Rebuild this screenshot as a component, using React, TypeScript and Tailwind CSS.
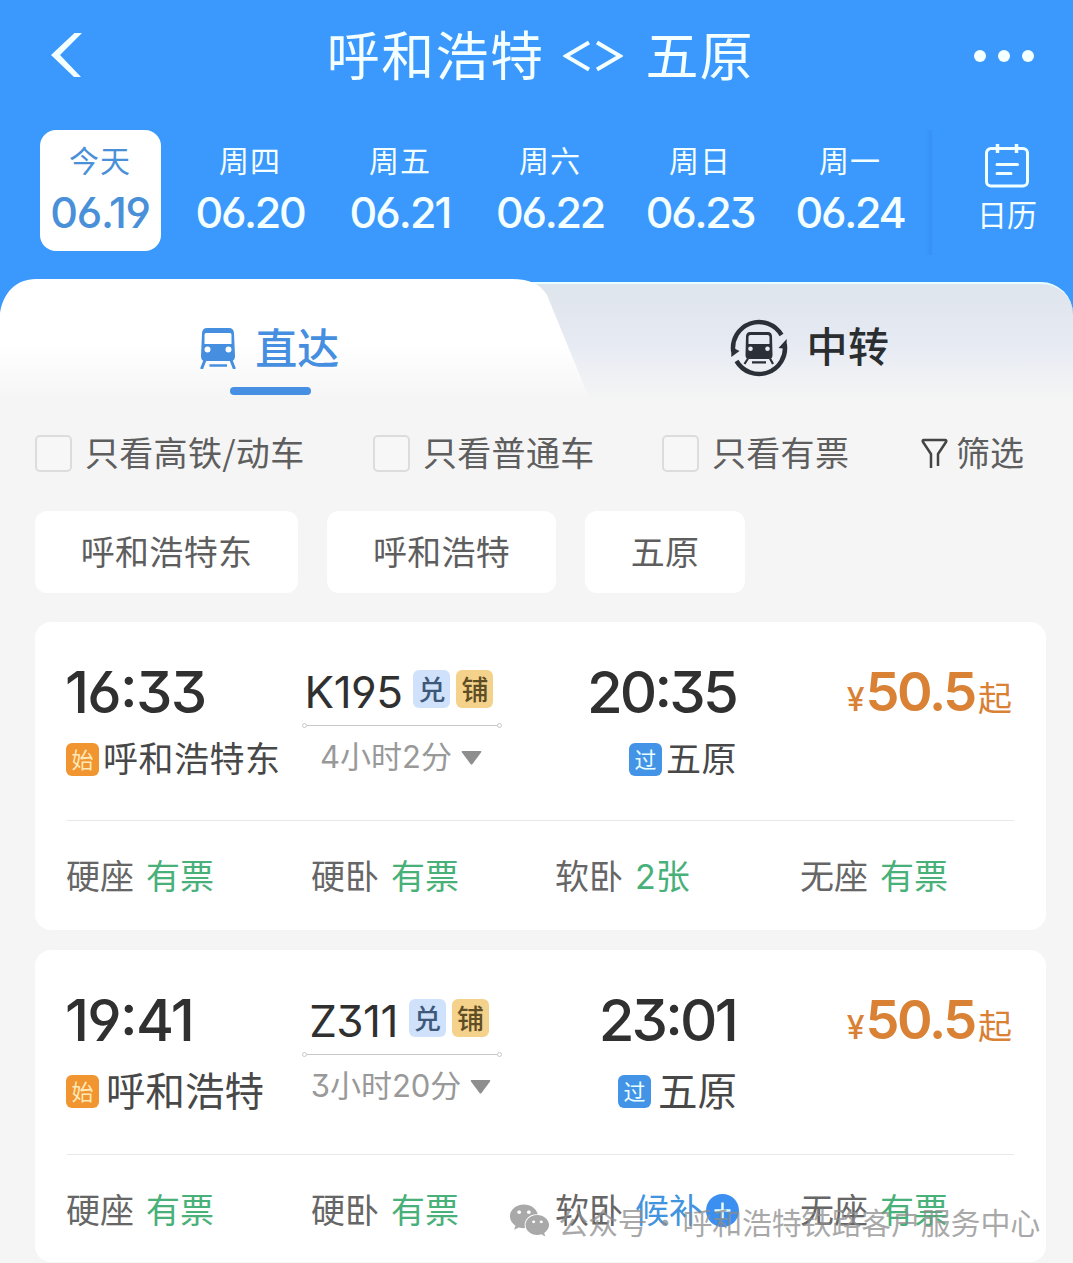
import { FaWeixin } from 'react-icons/fa';
import clsx from 'clsx';

interface DateItem {
  week: string;
  day: string;
  tracking: string;
}

interface Seat {
  name: string;
  status: string;
  waitlist?: boolean;
}

interface Train {
  no: string;
  depart: string;
  arrive: string;
  from: string;
  to: string;
  duration: string;
  price: string;
  large?: boolean;
  seats: Seat[];
}

// open 6 / 9 and flat-top 3
const digits = "font-['Inter','Noto_Sans_CJK_SC',sans-serif] [font-feature-settings:'cv03','cv04','cv09','calt']";

const dates: DateItem[] = [
  { week: '今天', day: '06.19', tracking: 'tracking-[-1.300px]' },
  { week: '周四', day: '06.20', tracking: 'tracking-[-2.300px]' },
  { week: '周五', day: '06.21', tracking: 'tracking-[-1.900px]' },
  { week: '周六', day: '06.22', tracking: 'tracking-[-2.300px]' },
  { week: '周日', day: '06.23', tracking: 'tracking-[-2.300px]' },
  { week: '周一', day: '06.24', tracking: 'tracking-[-2.300px]' },
];

const filters = [
  { label: '只看高铁/动车', width: 'w-[338px]' },
  { label: '只看普通车', width: 'w-[289px]' },
  { label: '只看有票', width: 'w-[259px]' },
];

const stations = [
  { name: '呼和浩特东', width: 'w-[263px]' },
  { name: '呼和浩特', width: 'w-[229px]' },
  { name: '五原', width: 'w-[160px]' },
];

const trains: Train[] = [
  {
    no: 'K195',
    depart: '16:33',
    arrive: '20:35',
    from: '呼和浩特东',
    to: '五原',
    duration: '4小时2分',
    price: '50.5',
    seats: [
      { name: '硬座', status: '有票' },
      { name: '硬卧', status: '有票' },
      { name: '软卧', status: '2张' },
      { name: '无座', status: '有票' },
    ],
  },
  {
    no: 'Z311',
    depart: '19:41',
    arrive: '23:01',
    from: '呼和浩特',
    to: '五原',
    duration: '3小时20分',
    price: '50.5',
    large: true,
    seats: [
      { name: '硬座', status: '有票' },
      { name: '硬卧', status: '有票' },
      { name: '软卧', status: '候补', waitlist: true },
      { name: '无座', status: '有票' },
    ],
  },
];

function TrainIcon({ className }: { className: string }) {
  return (
    <svg className={className} viewBox="0 0 36 41" fill="none">
      <path
        fillRule="evenodd"
        clipRule="evenodd"
        fill="currentColor"
        d="M7 0H29Q33.500 0 34 5L35 28Q35 33 31 33H5Q1 33 1 28L2 5Q2.500 0 7 0ZM6 5Q4.500 5 4.500 7V16H31.500V7Q31.500 5 30 5ZM7.500 18.500a3 3 0 1 0 0 6a3 3 0 0 0 0-6ZM28.500 18.500a3 3 0 1 0 0 6a3 3 0 0 0 0-6Z"
      />
      <path d="M5 32L1.500 41M31 32L34.500 41" stroke="currentColor" strokeWidth="3" />
      <path d="M9.500 37.500H27" stroke="currentColor" strokeWidth="2.500" />
    </svg>
  );
}

function TransferIcon() {
  return (
    <svg className="h-[58px] w-[58px]" viewBox="0 0 58 58" fill="none">
      <path d="M3.300 33A26 26 0 0 1 51.500 16" stroke="#2b2f38" strokeWidth="4.500" />
      <path d="M54.700 25A26 26 0 0 1 6.500 42" stroke="#2b2f38" strokeWidth="4.500" />
      <path d="M1.300 38V28L9.500 32Z M56.700 20V30L48.500 29Z" fill="#2b2f38" />
      <path
        fillRule="evenodd"
        clipRule="evenodd"
        fill="#2b2f38"
        d="M20 13H38Q41.500 13 42 17L42.500 36Q42.500 40 39 40H19Q15.500 40 15.500 36L16 17Q16.500 13 20 13ZM20.500 16Q18.500 16 18.500 18V25H39.500V18Q39.500 16 37.500 16ZM20.500 27.500a2.300 2.300 0 1 0 0 4.600a2.300 2.300 0 0 0 0-4.600ZM37.500 27.500a2.300 2.300 0 1 0 0 4.600a2.300 2.300 0 0 0 0-4.600Z"
      />
      <path d="M18 39.500L14.500 45M40 39.500L43 45M22 43.300H36" stroke="#2b2f38" strokeWidth="2.200" />
    </svg>
  );
}

function CalendarIcon() {
  return (
    <svg className="h-[44px] w-[44px]" viewBox="0 0 44 44" fill="none" stroke="#f0ffff" strokeWidth="3" strokeLinecap="round">
      <rect x="1.500" y="4.500" width="41" height="37.500" rx="4.500" />
      <path d="M12.500 0V9M31.500 0V9" strokeWidth="3.500" strokeLinecap="butt" />
      <path d="M12 20.500H32.500M12 29.500H26" />
    </svg>
  );
}

function Header() {
  return (
    <header className="h-[321px] bg-[#3b98fd] text-[#f4ffff]">
      <div className="flex h-[112px] items-center pr-[39px] pl-[51px]">
        <svg className="-mt-[3px] h-[44px] w-[32px]" viewBox="0 0 32 44" fill="none">
          <path d="M23.500 0H31L9 22L30 44H23L0 22Z" fill="currentColor" />
        </svg>
        <h1 className="flex flex-1 items-center justify-center pl-[24px] text-[53px] leading-[53px] whitespace-nowrap">
          <span className="-mt-[6px] tracking-[1.400px]">呼和浩特</span>
          <svg className="mr-[22px] ml-[19px] h-[32px] w-[60px]" viewBox="0 0 60 32" fill="none" stroke="currentColor" strokeWidth="4">
            <path d="M26 2.500L3 16L26 29.500M34 2.500L57 16L34 29.500" />
          </svg>
          <span className="-mt-[6px] tracking-[1.400px]">五原</span>
        </h1>
        <div className="flex gap-[12px]">
          <i className="size-[12px] rounded-full bg-[#f4ffff]" />
          <i className="size-[12px] rounded-full bg-[#f4ffff]" />
          <i className="size-[12px] rounded-full bg-[#f4ffff]" />
        </div>
      </div>

      <div className="flex pt-[18px] pl-[25px]">
        {dates.map((item, index) => (
          <div key={item.day} className="flex w-[150px] justify-center">
            <div
              className={clsx(
                'flex h-[121px] w-[121px] flex-col items-center rounded-[16px] pt-[12px]',
                index === 0 && 'bg-white text-[#4a90d9]',
              )}
            >
              <span className="text-[30px] leading-[34px] tracking-[1px]">{item.week}</span>
              <span className={clsx('mt-[12px] text-[43px] leading-[48px] font-medium', digits, item.tracking)}>
                {item.day}
              </span>
            </div>
          </div>
        ))}
        <div className="h-[125px] w-[7px] bg-linear-to-l from-[#3791f5] to-[#3b98fd]" />
        <div className="ml-[34px] flex w-[82px] flex-col items-center pt-[14px]">
          <CalendarIcon />
          <span className="mt-[8px] text-[30px] leading-[34px]">日历</span>
        </div>
      </div>
    </header>
  );
}

function Tabs() {
  return (
    <div className="relative z-10 mt-[-42px] grid h-[121px] grid-cols-2">
      {/* white rim and grey sheet of the inactive tab */}
      <div className="absolute top-[3px] right-0 h-[118px] w-[560px] rounded-tr-[32px] border-t-2 border-[#eaffff] bg-linear-to-b from-[#dfe5ec] via-[#e6eaf3] via-50% to-[#f5f5f5]" />
      <div className="absolute top-0 left-0 h-[121px] w-[590px] bg-linear-to-b from-white from-55% to-[#f5f5f5] [clip-path:path('M0_34C3_14_16_0_36_0H512C530_0_540_5_547_16L583_104L590_121H0Z')]" />

      <div className="relative flex flex-col items-center pt-[45px]">
        <div className="flex items-center text-[#468fe0]">
          <TrainIcon className="mt-[4px] ml-[3px] h-[41px] w-[36px]" />
          <span className="-mt-[2px] ml-[19px] text-[42px] leading-[44px] font-medium">直达</span>
        </div>
        <i className="mt-[18px] ml-[4px] h-[8px] w-[81px] rounded-full bg-[#468fe2]" />
      </div>
      <div className="relative flex items-start pt-[40px] pl-[193px] text-[#2a2e31]">
        <TransferIcon />
        <span className="mt-[3px] ml-[19px] text-[41px] leading-[44px] font-medium tracking-[0.500px]">中转</span>
      </div>
    </div>
  );
}

function Filters() {
  return (
    <div className="flex h-[107px] items-center pl-[35px] text-[34px] leading-[40px] whitespace-nowrap text-[#5e5e5e]">
      {filters.map(filter => (
        <label key={filter.label} className={clsx('flex items-center', filter.width)}>
          <i className="size-[37px] rounded-[5px] border-[2.500px] border-[#dcdcdc] bg-[#f7f7f7]" />
          <span className="-mt-[3px] ml-[13px] tracking-[0.300px]">{filter.label}</span>
        </label>
      ))}
      <svg className="mt-[-1px] h-[31px] w-[27px]" viewBox="0 0 27 31" fill="none" stroke="#444" strokeWidth="2.500" strokeLinejoin="round">
        <path d="M10 30V16L2 4Q1 2 3 2H24Q26 2 25 4L17 16V28" />
      </svg>
      <span className="-mt-[4px] ml-[8px]">筛选</span>
    </div>
  );
}

function Tag({ children, className }: { children: string; className: string }) {
  return (
    <span className={clsx('flex shrink-0 items-center justify-center leading-none', className)}>{children}</span>
  );
}

function TrainCard({ train }: { train: Train }) {
  const stationClass = train.large
    ? 'ml-[7px] text-[39.500px]'
    : 'ml-[4px] text-[35px] tracking-[0.500px]';
  const stationRow = clsx('flex h-[44px] items-center', train.large ? 'mt-[20px]' : 'mt-[16px]');
  const timeClass = clsx('pt-[41px] text-[58px] leading-[58px] font-medium text-[#303030]', digits);

  return (
    <section className={clsx('rounded-[16px] bg-white px-[32px]', train.large ? 'h-[312px]' : 'h-[308px]')}>
      <div className={clsx('flex border-b border-[#e8e8e8]', train.large ? 'h-[205px]' : 'h-[199px]')}>
        <div className="w-[235px] whitespace-nowrap">
          <div className={clsx('-ml-[2px] tracking-[-1.700px]', timeClass)}>{train.depart}</div>
          <div className={clsx('-ml-[1px]', stationRow)}>
            <Tag className="size-[33px] rounded-[6px] bg-[#f09530] pb-[2px] text-[22px] text-[#ffe9b8]">始</Tag>
            <span className={clsx('-mt-[4px] leading-[44px] text-[#484848]', stationClass)}>{train.from}</span>
          </div>
        </div>

        <div className="flex w-[200px] flex-col items-center whitespace-nowrap">
          <div className={clsx('flex items-center justify-center pr-[4px]', train.large ? 'h-[102px] pt-[37px]' : 'h-[101px] pt-[36px]')}>
            <span className={clsx('mt-[2px] -ml-[2px] text-[44px] leading-[44px] tracking-[-0.500px] text-[#303030]', digits)}>
              {train.no}
            </span>
            <Tag className="mt-[-3px] ml-[11px] h-[38px] w-[37px] rounded-[6px] bg-[#cfe1fb] pb-[2px] text-[27px] font-medium text-[#3d5878]">兑</Tag>
            <Tag className="mt-[-3px] ml-[6px] h-[38px] w-[37px] rounded-[6px] bg-[#f4d28b] pb-[2px] text-[27px] font-medium text-[#5e4d25]">铺</Tag>
          </div>
          <div className="flex h-[5px] w-full items-center">
            <i className="size-[5px] rounded-full border border-[#c8c8c8]" />
            <i className="h-px flex-1 bg-[#c8c8c8]" />
            <i className="size-[5px] rounded-full border border-[#c8c8c8]" />
          </div>
          <div className={clsx('mt-[12px] flex items-center text-[31px] leading-[36px] text-[#999]', digits)}>
            <span className="-mt-[1px] -ml-[2px]">{train.duration}</span>
            <svg className="ml-[9px] h-[14px] w-[21px]" viewBox="0 0 21 14">
              <path d="M1.500 0H19.500Q21 0 20 1.500L11.500 13Q10.500 14 9.500 13L1 1.500Q0 0 1.500 0Z" fill="#8e8e8e" />
            </svg>
          </div>
        </div>

        <div className="flex w-[235px] flex-col items-end whitespace-nowrap">
          <div className={clsx('mr-[1px] tracking-[-2.800px]', timeClass)}>{train.arrive}</div>
          <div className={stationRow}>
            <Tag className="size-[33px] rounded-[6px] bg-[#4393e6] pb-[2px] text-[22px] text-[#e9ffff]">过</Tag>
            <span className={clsx('-mt-[4px] leading-[44px] text-[#484848]', stationClass)}>{train.to}</span>
          </div>
        </div>

        <div className="flex flex-1 items-baseline justify-end pt-[38px] pr-[2px] text-[#d98135]">
          <span className={clsx('mr-[1px] text-[32px] font-medium', digits)}>¥</span>
          <span className={clsx('text-[54px] leading-[64px] font-semibold tracking-[-2.300px]', digits)}>{train.price}</span>
          <span className="ml-[3px] text-[34px]">起</span>
        </div>
      </div>

      <div className={clsx('grid grid-cols-[245px_244px_245px_1fr] items-center text-[34px] leading-[40px] text-[#666]', digits, train.large ? 'h-[111px]' : 'h-[112px]')}>
        {train.seats.map(seat => (
          <div key={seat.name} className="-ml-[1px] flex items-center whitespace-nowrap">
            <span>{seat.name}</span>
            <span className={clsx('ml-[12px]', seat.waitlist ? 'text-[#4294df]' : 'text-[#48b079]')}>
              {seat.status}
            </span>
            {seat.waitlist && (
              <svg className="ml-[3px] h-[33px] w-[33px]" viewBox="0 0 33 33">
                <circle cx="16.500" cy="16.500" r="16.500" fill="#3b8ff0" />
                <path d="M16.500 8.500V24.500M8.500 16.500H24.500" stroke="#e6ffff" strokeWidth="2.500" />
              </svg>
            )}
          </div>
        ))}
      </div>
    </section>
  );
}

export default function App() {
  return (
    <div className="relative h-[1263px] w-[1073px] overflow-hidden bg-[#f5f5f5] font-['Noto_Sans_CJK_SC',sans-serif]">
      <Header />
      <Tabs />
      <Filters />
      <div className="mt-[4px] flex gap-[29px] pl-[35px]">
        {stations.map(station => (
          <button
            key={station.name}
            className={clsx('h-[82px] rounded-[12px] bg-white pb-[4px] text-[34px] tracking-[0.300px] text-[#5e5e5e]', station.width)}
          >
            {station.name}
          </button>
        ))}
      </div>
      <main className="mt-[29px] flex flex-col gap-[20px] pr-[27px] pl-[35px]">
        {trains.map(train => (
          <TrainCard key={train.no} train={train} />
        ))}
      </main>

      <div className="absolute right-[33px] bottom-[22px] flex items-center text-[30px] leading-[36px] whitespace-nowrap text-[#8c8c8c]/75">
        <FaWeixin className="mr-[8px] size-[41px]" />
        <span className="tracking-[-0.200px] [word-spacing:-4px]">公众号 · 呼和浩特铁路客户服务中心</span>
      </div>
    </div>
  );
}
